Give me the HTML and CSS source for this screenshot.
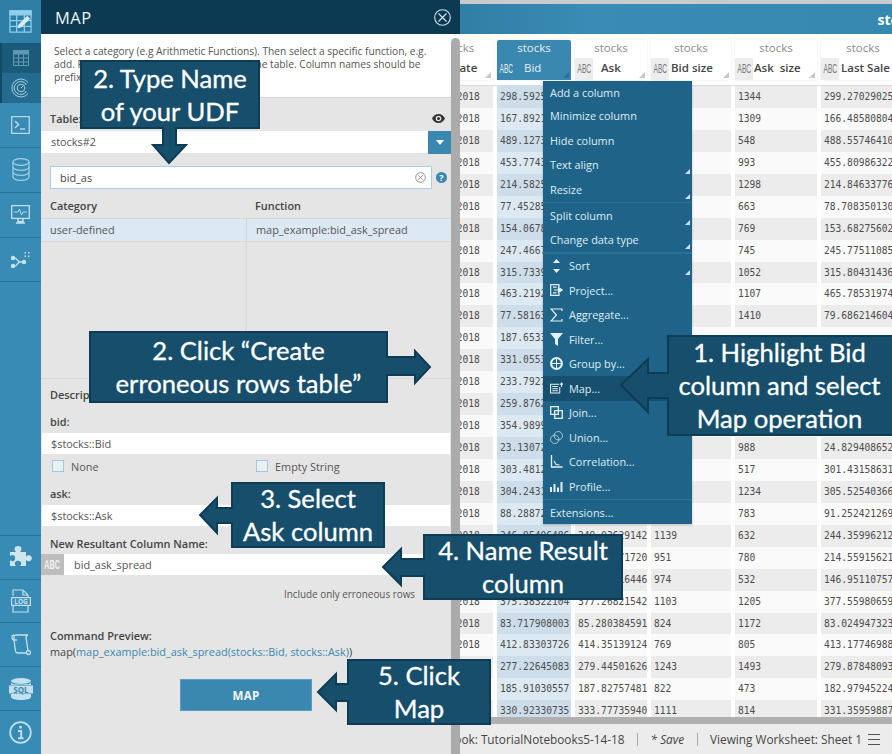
FILE: index.html
```html
<!DOCTYPE html>
<html lang="en">
<head>
  <meta charset="UTF-8">
  <title>MAP</title>
  <link rel="stylesheet" href="styles.css">
</head>
<body>
  <div class="app">
    <nav class="sidebar">
      <div class="nav-logo">
        <svg width="23" height="23" viewBox="0 0 24 24" fill="none" stroke="#8fd0ee" stroke-width="1.300">
          <path d="M1 1h22v22H1z"/>
          <path d="M1 1h22v4H1z" fill="#8fd0ee"/>
          <path d="M1 11h22M1 17h22M8 5v18M16 5v18"/>
          <path d="M9 19l1-4 9-9 3 3-9 9z" fill="#d5edf8" stroke="none"/>
        </svg>
      </div>
      <div class="nav-sub">
        <div class="nav-sub-item nav-sub-on">
          <svg width="16" height="16" viewBox="0 0 16 16" fill="none" stroke="#5f98b3" stroke-width="1.100">
            <path d="M.5 .5h15v15H.5z"/>
            <path d="M.5 .5h15v3.500H.5z" fill="#5f98b3"/>
            <path d="M.5 8h15M.5 12h15M5.500 4v11M10.500 4v11"/>
          </svg>
        </div>
        <div class="nav-sub-item">
          <svg width="20" height="20" viewBox="0 0 20 20" fill="none" stroke="#a9d0e2" stroke-width="1">
            <path d="M17 4.500A9 9 0 1 0 17 15.500"/>
            <path d="M15.500 7A6.500 6.500 0 1 0 15.500 13"/>
            <circle cx="10" cy="10" r="3.800"/>
            <path d="M10 10l2-2"/>
          </svg>
        </div>
      </div>
      <div class="nav-item">
        <svg width="19" height="18" viewBox="0 0 19 18" fill="none" stroke="#b5d8e8" stroke-width="1.300">
          <path d="M.7 .7h17.600v16.600H.7z"/>
          <path d="M4 5l3.500 3.500L4 12M9 13h5" stroke-width="1.600"/>
        </svg>
      </div>
      <div class="nav-item">
        <svg width="18" height="23" viewBox="0 0 18 23" fill="none" stroke="#a4cfe3" stroke-width="1.200">
          <ellipse cx="9" cy="4" rx="8" ry="3.300"/>
          <path d="M1 4v15c0 1.800 3.600 3.300 8 3.300s8-1.500 8-3.300V4"/>
          <path d="M1 9c0 1.800 3.600 3.300 8 3.300s8-1.500 8-3.300M1 14c0 1.800 3.600 3.300 8 3.300s8-1.500 8-3.300"/>
        </svg>
      </div>
      <div class="nav-item">
        <svg width="19" height="19" viewBox="0 0 19 19" fill="none" stroke="#c4e0ec" stroke-width="1.300">
          <path d="M.7 .7h17.600v12.600H.7z"/>
          <path d="M3 7h4l1.500-3 2 6 1.500-3h4" stroke-width=".9"/>
          <path d="M7 14v2.500h5V14M5 18h9" stroke-width="1.500"/>
        </svg>
      </div>
      <div class="nav-item">
        <svg width="19" height="17" viewBox="0 0 19 17" fill="none" stroke="#c4e0ec" stroke-width="1.500">
          <circle cx="2" cy="7" r="1.500" fill="#c4e0ec"/>
          <circle cx="2" cy="15" r="1.500" fill="#c4e0ec"/>
          <circle cx="13" cy="11" r="1.500" fill="#c4e0ec"/>
          <path d="M3 7c4 0 3 4 6 4h3M3 15c4 0 3-4 6-4"/>
          <path d="M13.500 1h1.500v1.500h-1.500zM17 1h1.500v1.500H17zM13.500 4.500h1.500V6h-1.500zM17 4.500h1.500V6H17z" fill="#c4e0ec" stroke="none"/>
        </svg>
      </div>
      <div class="nav-spacer"></div>
      <div class="nav-item nav-low">
        <svg width="22" height="22" viewBox="0 0 22 22" fill="#cfe5ef">
          <path d="M0 6h6c-1-1-1.500-2-1.500-3C4.500 1 6 0 8 0s3.500 1 3.500 3c0 1-.5 2-1.500 3h6v4.500c1-.8 1.800-1.200 2.800-1.200 1.800 0 3 1.300 3 3s-1.200 3-3 3c-1 0-1.800-.4-2.800-1.200V20H10c.8-1 1.200-1.800 1.200-2.600 0-1.600-1.400-2.600-3.200-2.600s-3.200 1-3.200 2.600c0 .8.400 1.600 1.200 2.600H0v-6c1 .8 1.800 1.200 2.600 1.200 1.600 0 2.600-1.400 2.600-3.200S4.200 9 2.600 9C1.800 9 1 9.400 0 10.200z"/>
        </svg>
      </div>
      <div class="nav-item nav-low">
        <svg width="22" height="24" viewBox="0 0 22 24" fill="none" stroke="#c4e0ec" stroke-width="1.200">
          <path d="M3 7V1h10l5 5v2M18 17v6H3v-6M13 1v5h5"/>
          <path d="M1.600 8.600h18.800v7.800H1.600z"/>
          <text x="11" y="15.300" class="nav-word">LOG</text>
        </svg>
      </div>
      <div class="nav-item nav-low">
        <svg width="20" height="22" viewBox="0 0 20 22" fill="none" stroke="#c4e0ec" stroke-width="1.300">
          <path d="M3 6V3c0-1.300.8-2 2-2h12c-1.300.2-2 1-2 2.300M1 3c0-1.300 1-2 2-2M1 3c0 1.800 1 3 2 3h3"/>
          <path d="M15 3l2 14"/>
          <path d="M3 6l1.500 11c.2 1.200 1 2 2 2h9.500"/>
          <circle cx="17.500" cy="18.500" r="2"/>
        </svg>
      </div>
      <div class="nav-item nav-low">
        <svg width="24" height="22" viewBox="0 0 24 22" fill="#c4e0ec">
          <ellipse cx="12" cy="3" rx="10" ry="3"/>
          <path d="M2 5c2 2 18 2 20 0v2H2zM2 16h20v3c0 1.700-4.500 3-10 3S2 20.700 2 19z"/>
          <path d="M0 7.500h24v8H0z"/>
          <text x="12" y="14.500" class="nav-word nav-word-dark">SQL</text>
        </svg>
      </div>
      <div class="nav-item nav-low">
        <svg width="23" height="23" viewBox="0 0 23 23" fill="none" stroke="#c4e0ec" stroke-width="1.700">
          <circle cx="11.500" cy="11.500" r="10.300"/>
          <path d="M11.500 5v2.500" stroke-width="2.600"/>
          <path d="M9 10h3.200v7M9 17.200h5.500" stroke-width="1.900"/>
        </svg>
      </div>
    </nav>

    <section class="panel">
      <header class="panel-head">
        <h1>MAP</h1>
        <svg width="17" height="17" viewBox="0 0 17 17" fill="none" stroke="#d7e4ea" stroke-width="1.100">
          <circle cx="8.500" cy="8.500" r="7.800"/>
          <path d="M4.500 4.500l8 8M12.500 4.500l-8 8"/>
        </svg>
      </header>
      <div class="panel-desc">
        <p>Select a category (e.g Arithmetic Functions). Then select a specific function, e.g.</p>
        <p>add. Fill in the function's arguments from the table. Column names should be</p>
        <p>prefixed with the name of the table.</p>
      </div>
      <div class="panel-body">
        <div class="table-label">
          <span class="label">Table:</span>
          <svg width="13" height="9" viewBox="0 0 13 9" fill="#333">
            <path d="M6.500 0C3.500 0 1.200 2 0 4.500 1.200 7 3.500 9 6.500 9S11.800 7 13 4.500C11.800 2 9.500 0 6.500 0zm0 7.300a2.800 2.800 0 1 1 0-5.600 2.800 2.800 0 0 1 0 5.600z"/>
            <circle cx="6.500" cy="4.500" r="1.500"/>
          </svg>
        </div>
        <div class="table-select">
          <span class="select-value">stocks#2</span>
          <span class="select-btn"><i class="caret"></i></span>
        </div>
        <div class="search-row">
          <div class="search-box">
            <span>bid_as</span>
            <svg width="11" height="11" viewBox="0 0 11 11" fill="none" stroke="#8a8a8a" stroke-width=".9">
              <circle cx="5.500" cy="5.500" r="4.800"/>
              <path d="M3.300 3.300l4.400 4.400M7.700 3.300l-4.400 4.400"/>
            </svg>
          </div>
          <span class="help-dot">?</span>
        </div>
        <div class="fn-head">
          <span class="label">Category</span>
          <span class="label">Function</span>
        </div>
        <div class="fn-list">
          <div class="fn-row">
            <span>user-defined</span>
            <span>map_example:bid_ask_spread</span>
          </div>
          <div class="fn-empty"></div>
        </div>
        <div class="label desc-title">Description:</div>
        <div class="label field-label">bid:</div>
        <div class="field">$stocks::Bid</div>
        <div class="check-row">
          <span class="check-item"><i class="check"></i>None</span>
          <span class="check-item"><i class="check"></i>Empty String</span>
        </div>
        <div class="label field-label field-ask">ask:</div>
        <div class="field">$stocks::Ask</div>
        <div class="label field-label field-new">New Resultant Column Name:</div>
        <div class="field field-typed">
          <span class="abc-tag"><b>ABC</b></span>
          <span>bid_ask_spread</span>
        </div>
        <div class="include-row">Include only erroneous rows</div>
        <div class="label preview-title">Command Preview:</div>
        <div class="preview">map(<span class="link">map_example:bid_ask_spread(stocks::Bid, stocks::Ask)</span>)</div>
        <div class="map-btn-row"><button class="map-btn">MAP</button></div>
      </div>
    </section>
    <div class="panel-scroll"></div>

    <main class="main">
      <div class="top-strip"></div>
      <div class="table-band"><span>stocks</span></div>
      <div class="grid grid-head">
        <div class="col-head col-first"><div class="col-src">stocks</div><div class="col-name"><span class="abc-mini"><b>ABC</b></span><span class="col-title col-title-date">Date</span></div></div>
        <div class="col-head col-on"><div class="col-src">stocks</div><div class="col-name"><span class="abc-mini"><b>ABC</b></span><span class="col-title">Bid</span></div></div>
        <div class="col-head"><div class="col-src">stocks</div><div class="col-name"><span class="abc-mini"><b>ABC</b></span><span class="col-title">Ask</span></div></div>
        <div class="col-head"><div class="col-src">stocks</div><div class="col-name"><span class="abc-mini"><b>ABC</b></span><span class="col-title">Bid size</span></div></div>
        <div class="col-head"><div class="col-src">stocks</div><div class="col-name"><span class="abc-mini"><b>ABC</b></span><span class="col-title">Ask size</span></div></div>
        <div class="col-head"><div class="col-src">stocks</div><div class="col-name"><span class="abc-mini"><b>ABC</b></span><span class="col-title">Last Sale</span></div></div>
      </div>
      <div class="rows">
        <div class="grid row"><span>01/02/2018</span><span>298.59250000</span><span>300.27029025</span><span>1344</span><span>1344</span><span>299.27029025</span></div>
        <div class="grid row"><span>01/03/2018</span><span>167.89210000</span><span>168.48580804</span><span>1309</span><span>1309</span><span>166.48580804</span></div>
        <div class="grid row"><span>01/04/2018</span><span>489.12730000</span><span>490.55746410</span><span>548</span><span>548</span><span>488.55746410</span></div>
        <div class="grid row"><span>01/05/2018</span><span>453.77430000</span><span>455.80986322</span><span>993</span><span>993</span><span>455.80986322</span></div>
        <div class="grid row"><span>01/08/2018</span><span>214.58250000</span><span>216.84633776</span><span>1298</span><span>1298</span><span>214.84633776</span></div>
        <div class="grid row"><span>01/09/2018</span><span>77.452850000</span><span>79.708350130</span><span>663</span><span>663</span><span>78.708350130</span></div>
        <div class="grid row"><span>01/10/2018</span><span>154.06780000</span><span>155.68275602</span><span>769</span><span>769</span><span>153.68275602</span></div>
        <div class="grid row"><span>01/11/2018</span><span>247.46670000</span><span>248.77511085</span><span>745</span><span>745</span><span>245.77511085</span></div>
        <div class="grid row"><span>01/12/2018</span><span>315.73390000</span><span>317.80431436</span><span>1052</span><span>1052</span><span>315.80431436</span></div>
        <div class="grid row"><span>01/16/2018</span><span>463.21920000</span><span>465.78531974</span><span>1107</span><span>1107</span><span>465.78531974</span></div>
        <div class="grid row"><span>01/17/2018</span><span>77.581630000</span><span>79.686214604</span><span>1410</span><span>1410</span><span>79.686214604</span></div>
        <div class="grid row"><span>01/18/2018</span><span>187.65330000</span><span></span><span></span><span></span><span></span></div>
        <div class="grid row"><span>01/19/2018</span><span>331.05530000</span><span></span><span></span><span></span><span></span></div>
        <div class="grid row"><span>01/22/2018</span><span>233.79270000</span><span></span><span></span><span></span><span></span></div>
        <div class="grid row"><span>01/23/2018</span><span>259.87620000</span><span></span><span></span><span></span><span></span></div>
        <div class="grid row"><span>01/24/2018</span><span>354.98990000</span><span></span><span></span><span></span><span></span></div>
        <div class="grid row"><span>01/25/2018</span><span>23.130720000</span><span>24.829408652</span><span>988</span><span>988</span><span>24.829408652</span></div>
        <div class="grid row"><span>01/26/2018</span><span>303.48120000</span><span>305.43158631</span><span>517</span><span>517</span><span>301.43158631</span></div>
        <div class="grid row"><span>01/29/2018</span><span>304.24310000</span><span>306.52540366</span><span>1234</span><span>1234</span><span>305.52540366</span></div>
        <div class="grid row"><span>01/30/2018</span><span>88.288720000</span><span>90.252421269</span><span>783</span><span>783</span><span>91.252421269</span></div>
        <div class="grid row"><span>01/31/2018</span><span>246.95406486</span><span>249.03629142</span><span>1139</span><span>632</span><span>244.35996212</span></div>
        <div class="grid row"><span>02/01/2018</span><span>213.20118843</span><span>215.44071720</span><span>951</span><span>780</span><span>214.55915621</span></div>
        <div class="grid row"><span>02/02/2018</span><span>145.88120934</span><span>147.60216446</span><span>974</span><span>532</span><span>146.95110757</span></div>
        <div class="grid row"><span>02/05/2018</span><span>375.38322104</span><span>377.26821542</span><span>1103</span><span>1205</span><span>377.55980659</span></div>
        <div class="grid row"><span>02/06/2018</span><span>83.717908003</span><span>85.280384591</span><span>824</span><span>1172</span><span>83.024947323</span></div>
        <div class="grid row"><span>02/07/2018</span><span>412.83303726</span><span>414.35139124</span><span>769</span><span>805</span><span>413.17746988</span></div>
        <div class="grid row"><span>02/08/2018</span><span>277.22645083</span><span>279.44501626</span><span>1243</span><span>1493</span><span>279.87848093</span></div>
        <div class="grid row"><span>02/09/2018</span><span>185.91030557</span><span>187.82757481</span><span>822</span><span>473</span><span>182.97945224</span></div>
        <div class="grid row"><span>02/12/2018</span><span>330.92330735</span><span>333.77735940</span><span>1111</span><span>814</span><span>331.35959887</span></div>
      </div>
      <div class="h-scroll"></div>
      <footer class="status">
        <span>Notebook: TutorialNotebooks5-14-18</span>
        <i class="status-sep"></i>
        <em>* Save</em>
        <i class="status-sep"></i>
        <span>Viewing Worksheet: Sheet 1</span>
        <span class="burger"><i></i><i></i><i></i></span>
      </footer>
    </main>
  </div>

  <!-- column menu -->
  <ul class="menu">
    <li>Add a column</li>
    <li>Minimize column</li>
    <li>Hide column</li>
    <li class="has-sub">Text align</li>
    <li class="has-sub">Resize</li>
    <li class="menu-div"></li>
    <li class="has-sub">Split column</li>
    <li class="has-sub">Change data type</li>
    <li class="menu-div"></li>
    <li class="has-sub">
      <svg width="10" height="14" viewBox="0 0 10 14" fill="#e4eff5"><path d="M5 0l3.500 4h-7zM5 14l-3.500-4h7z"/></svg>
      Sort
    </li>
    <li>
      <svg width="13" height="12" viewBox="0 0 13 12" fill="none" stroke="#e4eff5" stroke-width="1.200"><path d="M9 3V.7H.7v10.600H9V9"/><path d="M4 6h5M3 3.200h3.500M3 8.800h3.500"/><path d="M8.500 3.500L12.300 6 8.500 8.500z" fill="#e4eff5"/></svg>
      Project...
    </li>
    <li>
      <svg width="13" height="14" viewBox="0 0 13 14" fill="none" stroke="#e4eff5" stroke-width="1.200"><path d="M12 3V1H1l5.500 6L1 13h11v-2"/></svg>
      Aggregate...
    </li>
    <li>
      <svg width="13" height="13" viewBox="0 0 13 13" fill="#e4eff5"><path d="M0 0h13L8 6v7L5 11V6z"/></svg>
      Filter...
    </li>
    <li>
      <svg width="13" height="13" viewBox="0 0 13 13" fill="#e4eff5"><path d="M6.500 0a6.500 6.500 0 1 0 0 13 6.500 6.500 0 0 0 0-13zM6 2v4H2.200C2.400 3.900 4 2.200 6 2zm1 0c2 .2 3.600 1.900 3.800 4H7zM2.200 7H6v4c-2-.2-3.600-1.900-3.800-4zM7 7h3.800c-.2 2.100-1.800 3.800-3.800 4z"/></svg>
      Group by...
    </li>
    <li class="menu-on">
      <svg width="14" height="12" viewBox="0 0 14 12" fill="none" stroke="#e4eff5" stroke-width="1.100"><path d="M10 2H.6v9.400h9.900V5"/><path d="M2.500 4.500h6M2.500 6.800h6M2.500 9h6"/><path d="M12.500 5V1M11 2.300L12.500 .6 14 2.300"/></svg>
      Map...
    </li>
    <li>
      <svg width="13" height="13" viewBox="0 0 13 13" fill="none" stroke="#e4eff5" stroke-width="1.300"><path d="M.7 .7h7.600v7.600H.7z"/><path d="M4.700 4.700h7.600v7.600H4.700z"/></svg>
      Join...
    </li>
    <li>
      <svg width="13" height="13" viewBox="0 0 13 13" fill="none" stroke="#c9dde8" stroke-width=".8"><circle cx="8.300" cy="4.700" r="4.200"/><circle cx="4.700" cy="8.300" r="4.200"/></svg>
      Union...
    </li>
    <li>
      <svg width="12" height="13" viewBox="0 0 12 13" fill="none" stroke="#e4eff5" stroke-width="1.300"><path d="M1 0v12h11"/><path d="M3.500 6l2 3.500 3.500 .5" stroke-width="1.100"/></svg>
      Correlation...
    </li>
    <li>
      <svg width="13" height="11" viewBox="0 0 13 11" fill="#e4eff5"><path d="M0 6h2v5H0zM3.500 3h2v8h-2zM7 6.500h2V11H7zM10.500 1h2v10h-2z"/></svg>
      Profile...
    </li>
    <li class="menu-div"></li>
    <li>Extensions...</li>
  </ul>

  <!-- tutorial callouts -->
  <div class="callout callout-a">
    <svg width="180" height="69"><polygon points="1,1 179,1 179,68 96,68 96,85 106,85 89,103 73,85 83,85 83,68 1,68"/></svg>
    <p>2. Type Name<br>of your UDF</p>
  </div>
  <div class="callout callout-b">
    <svg width="299" height="72"><polygon points="1,1 298,1 298,26 326,26 326,20 341,36 326,52 326,44 298,44 298,71 1,71"/></svg>
    <p>2. Click &ldquo;Create<br>erroneous rows table&rdquo;</p>
  </div>
  <div class="callout callout-c">
    <svg width="154" height="66"><polygon points="1,1 153,1 153,65 1,65 1,41 -14,41 -14,51 -31,33 -14,16 -14,26 1,26"/></svg>
    <p>3. Select<br>Ask column</p>
  </div>
  <div class="callout callout-d">
    <svg width="200" height="66"><polygon points="1,1 199,1 199,65 1,65 1,42 -22,42 -22,51 -40,33 -22,15 -22,25 1,25"/></svg>
    <p>4. Name Result<br>column</p>
  </div>
  <div class="callout callout-e">
    <svg width="144" height="66"><polygon points="1,1 143,1 143,65 1,65 1,42 -11,42 -11,51 -29,33 -11,15 -11,25 1,25"/></svg>
    <p>5. Click<br>Map</p>
  </div>
  <div class="callout callout-f">
    <svg width="226" height="101"><polygon points="1,1 230,1 230,100 1,100 1,63 -19,63 -19,77 -46,50 -19,24 -19,38 1,38"/></svg>
    <p>1. Highlight Bid<br>column and select<br>Map operation</p>
  </div>
</body>
</html>
```

FILE: styles.css
```css
* {
  box-sizing: border-box;
}

html, body {
  margin: 0;
  height: 100%;
}

body {
  position: relative;
  width: 892px;
  height: 754px;
  overflow: hidden;
  font-family: "Open Sans", sans-serif;
  font-size: 10.9px;
  color: #555;
  background: #fff;
}

p, h1, ul {
  margin: 0;
  padding: 0;
}

.app {
  display: flex;
  height: 754px;
}

/* left nav */
.sidebar {
  width: 41px;
  flex: none;
  display: flex;
  flex-direction: column;
  background: #388bb4;
}

.nav-logo {
  height: 43px;
  display: flex;
  align-items: center;
  justify-content: center;
  background: #2e7ea6;
}

.nav-sub {
  height: 60px;
  border-left: 2px solid #134a65;
}

.nav-sub-item {
  height: 30px;
  display: flex;
  align-items: center;
  justify-content: center;
  padding-right: 2px;
  background: #236b8f;
}

.nav-sub-on {
  background: #1c5a79;
}

.nav-item {
  height: 45px;
  display: flex;
  align-items: center;
  justify-content: center;
  border-bottom: 1px solid #2b7399;
}

.nav-low {
  height: 44px;
  border-bottom: 0;
  border-top: 1px solid #2b7399;
}

.nav-spacer {
  height: 253px;
}

.nav-word {
  font: 700 6.5px "Open Sans", sans-serif;
  fill: #c4e0ec;
  stroke: none;
  text-anchor: middle;
}

.nav-word-dark {
  font-size: 8px;
  fill: #358ab3;
}

/* map panel */
.panel {
  width: 410px;
  flex: none;
  display: flex;
  flex-direction: column;
  background: #e5e5e5;
}

.panel-head {
  height: 34px;
  flex: none;
  display: flex;
  align-items: center;
  justify-content: space-between;
  padding: 0 9px 0 14px;
  margin-right: -9px;
  background: #0b3a52;
  position: relative;
}

.panel-head h1 {
  font-size: 16.5px;
  font-weight: 400;
  letter-spacing: .5px;
  color: #eef3f6;
}

.panel-desc {
  height: 64px;
  flex: none;
  padding: 11px 0 0 13px;
  background: #fff;
  border-bottom: 1px solid #d4d4d4;
  font-size: 10.2px;
  line-height: 13px;
  white-space: nowrap;
}

.panel-body {
  flex: 1;
  min-height: 0;
}

.label {
  font-weight: 600;
  color: #444;
}

.table-label {
  height: 33px;
  display: flex;
  align-items: center;
  justify-content: space-between;
  padding: 7px 6px 0 9px;
}

.table-select {
  height: 22px;
  display: flex;
  background: #fff;
  align-items: center;
  justify-content: space-between;
  padding-left: 10px;
}

.select-value {
  margin-top: -1px;
}

.select-btn {
  width: 23px;
  height: 23px;
  display: flex;
  align-items: center;
  justify-content: center;
  background: #3a87b0;
}

.caret {
  width: 0;
  height: 0;
  border: 4px solid transparent;
  border-top: 5px solid #fff;
  border-bottom: 0;
}

.search-row {
  display: flex;
  align-items: center;
  gap: 3px;
  margin: 13px 0 0 9px;
}

.search-box {
  width: 382px;
  height: 23px;
  display: flex;
  align-items: center;
  justify-content: space-between;
  padding: 0 5px 0 9px;
  background: #fff;
  border: 1px solid #a5cfe6;
  color: #444;
}

.help-dot {
  width: 11px;
  height: 11px;
  border-radius: 50%;
  margin-left: 1px;
  background: #3a87b0;
  color: #fff;
  font-size: 9px;
  font-weight: 700;
  line-height: 11px;
  text-align: center;
}

.fn-head {
  display: grid;
  grid-template-columns: 205px 205px;
  height: 30px;
  padding-top: 9px;
  line-height: 16px;
  border-bottom: 1px solid #d8d8d8;
}

.fn-head span {
  padding-left: 9px;
}

.fn-list {
  height: 160px;
  border-bottom: 1px solid #d8d8d8;
  display: flex;
  flex-direction: column;
  background: linear-gradient(#ddd, #ddd) 204px 0 / 2px 100% no-repeat;
}

.fn-row {
  height: 23px;
  display: grid;
  grid-template-columns: 205px 205px;
  align-items: center;
  background: #dce9f2;
  border-bottom: 1px solid #d8d8d8;
}

.fn-row span {
  padding-left: 9px;
  margin-top: -1px;
}

.fn-row span + span {
  border-left: 1px solid #ccd7de;
  line-height: 22px;
}

.desc-title {
  padding: 8px 0 0 9px;
  line-height: 16px;
}

.field-label {
  padding: 11px 0 0 9px;
  line-height: 16px;
}

.field {
  height: 21px;
  margin: 3px 1px 0;
  padding-left: 9px;
  display: flex;
  align-items: center;
  background: #fff;
}

.check-row {
  display: grid;
  grid-template-columns: 204px 204px;
  height: 24px;
  align-items: center;
  padding-left: 11px;
}

.check-item {
  display: flex;
  align-items: center;
  gap: 7px;
}

.check {
  width: 12px;
  height: 12px;
  border: 1px solid #9cc8e2;
  background: #eaeff2;
}

.field-ask {
  padding-top: 8px;
}

.field-new {
  padding-top: 10px;
}

.field-typed {
  margin-top: 2px;
  margin-left: 0;
  padding-left: 0;
  gap: 10px;
}

.abc-tag {
  width: 23px;
  height: 21px;
  display: flex;
  align-items: center;
  justify-content: center;
  background: #bdbdbd;
  color: #f2f2f2;
}

.abc-tag b,
.abc-mini b {
  display: block;
  font-family: "Liberation Sans", sans-serif;
  font-weight: 700;
  font-size: 13px;
  transform: scaleX(.55);
}

.include-row {
  padding: 12px 36px 0 0;
  font-size: 9.9px;
  line-height: 15px;
  text-align: right;
}

.preview-title {
  padding: 26px 0 0 9px;
  line-height: 16px;
}

.preview {
  padding-left: 9px;
  line-height: 15px;
  color: #444;
}

.link {
  color: #3a87b0;
}

.map-btn-row {
  display: flex;
  padding: 20px 0 0 139px;
}

.map-btn {
  width: 132px;
  height: 32px;
  border: 1px solid #5d9dbf;
  background: #3a87b0;
  color: #f2f7fa;
  font-family: inherit;
  font-size: 11.5px;
  font-weight: 700;
  letter-spacing: .4px;
}

.panel-scroll {
  width: 9px;
  flex: none;
  margin-top: 38px;
  border-radius: 5px 5px 0 0;
  background: #ababab;
}

/* worksheet table */
.main {
  flex: 1;
  min-width: 0;
  display: flex;
  flex-direction: column;
  overflow: hidden;
}

.top-strip {
  height: 4px;
  flex: none;
  background: #c9cccd;
}

.table-band {
  height: 30px;
  flex: none;
  display: flex;
  justify-content: flex-end;
  align-items: center;
  background: linear-gradient(to right, #2f7ea6, #3a8bb5 30%, #3688b1);
  color: #fff;
  font-size: 14px;
  font-weight: 700;
  overflow: hidden;
}

.table-band span {
  margin-right: -30px;
}

.grid {
  display: grid;
  grid-template-columns: 83px 74px 72px 80px 82px 84px;
  column-gap: 4px;
  margin-left: -50px;
  flex: none;
}

.grid-head {
  height: 52px;
  padding-top: 6px;
  border-bottom: 1px solid #dcdcdc;
}

.col-head {
  height: 40px;
  background: #fff;
  border-radius: 2px;
  box-shadow: 0 0 2px rgba(0, 0, 0, .12);
  text-align: center;
  font-size: 11.5px;
  color: #8b8b8b;
}

.col-src {
  height: 18px;
  line-height: 16px;
}

.col-first .col-src {
  padding-left: 12px;
}

.col-name {
  position: relative;
  height: 22px;
  display: flex;
  align-items: center;
  background: #fff;
  color: #444;
  font-weight: 600;
  white-space: nowrap;
}

.col-name::after {
  content: "";
  position: absolute;
  right: 2px;
  bottom: 2px;
  width: 0;
  height: 0;
  border-left: 6px solid transparent;
  border-bottom: 6px solid #c8c8c8;
}

.abc-mini {
  width: 18px;
  height: 22px;
  flex: none;
  display: flex;
  align-items: center;
  justify-content: center;
  background: #ededed;
  color: #777;
}

.abc-mini b {
  font-size: 12px;
  font-weight: 400;
}

.col-title {
  padding: 0 0 3px 2px;
}

.col-head .col-title-date {
  padding-left: 23px;
}

.col-head:nth-child(3) .col-title {
  padding-left: 8px;
}

.col-head:nth-child(5) .col-title {
  padding-left: 1px;
  word-spacing: 3px;
}

.col-on {
  background: #3a87b0;
  color: #e6f1f6;
}

.col-on .col-name {
  background: #3a87b0;
  color: #e6f1f6;
  font-weight: 400;
}

.col-on .abc-mini {
  background: #3a87b0;
  color: #e6f1f6;
}

.col-on .col-title {
  padding-left: 9px;
}

.col-on .col-name::after {
  border-bottom-color: #2b6f94;
}

.rows {
  flex: 1;
  min-height: 0;
  overflow: hidden;
}

.row {
  height: 21.95px;
  font-family: "DejaVu Sans Mono", monospace;
  font-size: 9.6px;
  color: #4d4d4d;
}

.row span {
  display: block;
  line-height: 21px;
  padding-left: 3px;
  background: #fafafa;
  white-space: nowrap;
  overflow: hidden;
}

.row span:first-child {
  padding-left: 12px;
}

.row:nth-child(odd) span {
  background: #ececec;
}

.row span:nth-child(2) {
  background: #dde9f2;
}

.row:nth-child(odd) span:nth-child(2) {
  background: #cddeea;
}

.h-scroll {
  height: 7px;
  flex: none;
  background: #b0b0b0;
}

.status {
  height: 30px;
  flex: none;
  display: flex;
  align-items: center;
  justify-content: flex-end;
  gap: 12px;
  padding-right: 12px;
  background: #ececec;
  color: #444;
  font-size: 11.8px;
  white-space: nowrap;
}

.status em {
  padding: 0 1px;
}

.status-sep {
  width: 1px;
  height: 13px;
  flex: none;
  background: #aaa;
}

.burger {
  display: flex;
  flex: none;
  flex-direction: column;
  gap: 4px;
  width: 12px;
  margin-left: -6px;
}

.burger i {
  height: 1px;
  background: #555;
}

/* column menu */
.menu {
  position: absolute;
  left: 543px;
  top: 81px;
  width: 149px;
  height: 443px;
  list-style: none;
  background: #1f6488;
  color: #dfecf3;
  font-size: 10.9px;
  box-shadow: 0 1px 2px rgba(0, 0, 0, .25);
}

.menu li {
  position: relative;
  height: 24.5px;
  display: flex;
  align-items: center;
  padding-left: 7px;
  gap: 5px;
  white-space: nowrap;
}

.menu li:first-child {
  height: 22.5px;
}

.menu li svg {
  width: 13px;
  margin-right: 1px;
  flex: none;
}

.menu .menu-div {
  height: 1.5px;
  background: #2a7196;
}

.menu .menu-on {
  background: #174f6e;
}

.has-sub::after {
  content: "";
  position: absolute;
  right: 2px;
  bottom: 3px;
  width: 0;
  height: 0;
  border-left: 5px solid transparent;
  border-bottom: 5px solid #cfe0ea;
}

/* tutorial callouts */
.callout {
  position: absolute;
  display: flex;
  align-items: center;
  justify-content: center;
  font-family: Lato, sans-serif;
  font-size: 25.6px;
  line-height: 33px;
  color: #fff;
  -webkit-text-stroke: .3px #fff;
  text-align: center;
  white-space: nowrap;
}

.callout svg {
  position: absolute;
  left: 0;
  top: 0;
  overflow: visible;
}

.callout polygon {
  fill: #164e6b;
  stroke: #0e3c55;
  stroke-width: 2;
}

.callout p {
  position: relative;
}

.callout-a {
  left: 80px;
  top: 60px;
  width: 180px;
  height: 69px;
}

.callout-b {
  left: 89px;
  top: 331px;
  width: 299px;
  height: 72px;
}

.callout-c {
  left: 231px;
  top: 482px;
  width: 154px;
  height: 66px;
}

.callout-d {
  left: 423px;
  top: 534px;
  width: 200px;
  height: 66px;
}

.callout-e {
  left: 347px;
  top: 659px;
  width: 144px;
  height: 66px;
}

.callout-f {
  left: 667px;
  top: 335px;
  width: 225px;
  height: 101px;
}
```
